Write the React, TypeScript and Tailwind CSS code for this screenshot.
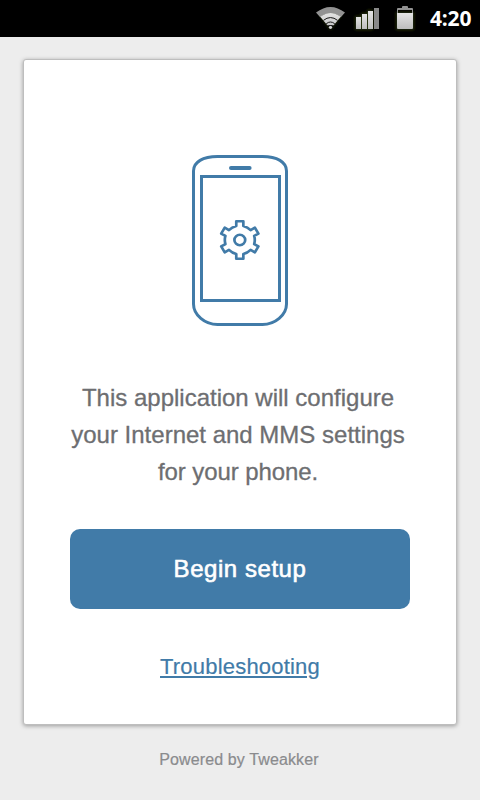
function StatusBar() {
  return (
    <header className="flex h-[37px] shrink-0 items-start bg-black">
      <svg className="ml-[312px] h-[37px] w-[112px] shrink-0" viewBox="312 0 112 37" aria-hidden="true">
        <defs>
          <linearGradient id="metal" x1="0" y1="0" x2="0" y2="1">
            <stop offset="0" stopColor="#e4e4e4" />
            <stop offset="1" stopColor="#bdbdbd" />
          </linearGradient>
          <filter id="glow" x="-30%" y="-30%" width="160%" height="160%">
            <feGaussianBlur stdDeviation="1.5" />
          </filter>
        </defs>
        <g filter="url(#glow)" fill="#27300f">
          <path d="M319.5 15 Q330.5 6 341.5 15 L330.5 30Z" />
          <path d="M355 16H361V13H367V10H373V30H355Z" />
          <path d="M396 12H414V30H396Z" />
        </g>
        <path d="M316 12.6 Q330.5 1.3 345 12.6 L340.8 17.2 Q330.5 9.5 320.2 17.2Z" fill="#929292" />
        <path d="M320.2 16.8 Q330.5 9 340.8 16.8 L330.5 29Z" fill="url(#metal)" />
        <g fill="none" stroke="#171717" strokeWidth="1">
          <path d="M323.4 20.4 Q330.5 14.7 337.6 20.4" />
          <path d="M326.2 23.8 Q330.5 20.2 334.8 23.8" />
        </g>
        <path d="M327 25.4 L330.5 25 L334 25.4 L330.5 29.2Z" fill="#000" />
        <circle cx="330.5" cy="27.3" r="1.6" fill="#d4d4d4" />
        <g fill="url(#metal)">
          <rect x="356" y="17" width="5" height="12" />
          <rect x="362" y="14" width="5" height="15" />
          <rect x="368" y="11" width="5" height="18" />
        </g>
        <rect x="374" y="8" width="5" height="21" fill="#898989" />
        <path fillRule="evenodd" d="M397 9Q397 8 398 8H402V7Q402 6 403 6H407Q408 6 408 7V8H412Q413 8 413 9V13H397ZM398 10H412V13H398Z" fill="#929292" />
        <path d="M397 13H413V28Q413 29 412 29H398Q397 29 397 28Z" fill="url(#metal)" />
      </svg>
      <time className="ml-[6px] pt-[4px] font-['Open_Sans',sans-serif] text-[21px] leading-[28px] font-bold tracking-[-0.2px] text-white">4:20</time>
    </header>
  );
}

function PhoneIcon() {
  return (
    <svg className="h-[171px] w-[96px]" viewBox="192 155 96 171" fill="none" stroke="#417ba8" aria-hidden="true">
      <path strokeWidth="3" d="M193.5 171C193.5 162 203 156.5 217.5 156.5H262.5C277 156.5 286.5 162 286.5 171V304C286.5 315 275 324.5 262.5 324.5H217.5C205 324.5 193.5 315 193.5 304Z" />
      <rect x="201.5" y="176.5" width="78" height="124" strokeWidth="3" />
      <path d="M231 168H249.6" strokeWidth="4" strokeLinecap="round" />
      <g transform="translate(239.8 240) scale(1.04 1)" strokeWidth="2.6" strokeLinejoin="round">
        <path d="M-3.4-14V-18.7H3.4V-14A14.4 14.4 0 0 1 10.42-9.94L14.49-12.29L17.89-6.41L13.82-4.06A14.4 14.4 0 0 1 13.82 4.06L17.89 6.41L14.49 12.29L10.42 9.94A14.4 14.4 0 0 1 3.4 14V18.7H-3.4V14A14.4 14.4 0 0 1-10.42 9.94L-14.49 12.29L-17.89 6.41L-13.82 4.06A14.4 14.4 0 0 1-13.82-4.06L-17.89-6.41L-14.49-12.29L-10.42-9.94A14.4 14.4 0 0 1-3.4-14Z" />
        <circle r="5.2" />
      </g>
    </svg>
  );
}

export default function App() {
  return (
    <div className="flex h-[800px] w-[480px] flex-col overflow-hidden bg-[#ededed] font-['Liberation_Sans',Arial,sans-serif]">
      <StatusBar />
      <main className="mx-[23px] mt-[22px] flex h-[666px] shrink-0 flex-col items-center rounded-[3px] border border-[#bebebe] bg-white pt-[95px] shadow-[0_1px_4px_rgba(0,0,0,0.35)]">
        <PhoneIcon />
        <p className="mt-[53px] mr-[4px] flex flex-col items-center text-[24px] leading-[37px] whitespace-nowrap text-[#6d6e71] [-webkit-text-stroke:0.3px_#6d6e71]">
          <span>This application will configure</span>
          <span>your Internet and MMS settings</span>
          <span className="tracking-[-0.1px]">for your phone.</span>
        </p>
        <button className="mt-[39px] h-[80px] w-[340px] shrink-0 rounded-[10px] bg-[#417ba8] text-[24px] tracking-[0.55px] text-white [-webkit-text-stroke:0.6px_white]">
          Begin setup
        </button>
        <a href="#" className="mt-[41px] text-[22px] leading-[34px] tracking-[0.2px] text-[#417ba8] underline decoration-2 underline-offset-2 [-webkit-text-stroke:0.2px_#417ba8]">
          Troubleshooting
        </a>
      </main>
      <footer className="mt-[23px] mr-[2px] text-center text-[16px] leading-[24px] tracking-[0.12px] text-[#8a8b8d] [-webkit-text-stroke:0.2px_#8a8b8d]">Powered by Tweakker</footer>
    </div>
  );
}
